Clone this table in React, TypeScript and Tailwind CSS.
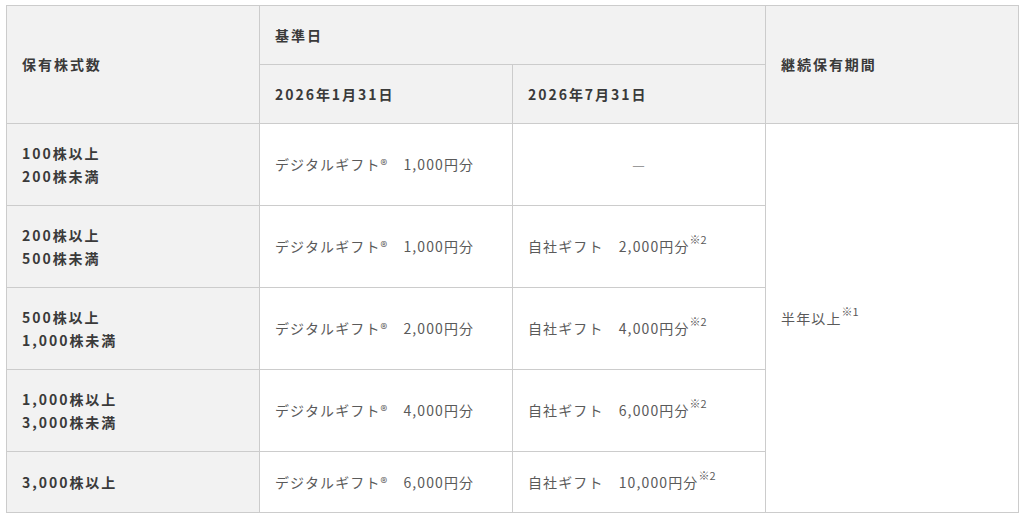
const rows = [
  { shares: ['100株以上', '200株未満'], jan: '1,000', jul: null },
  { shares: ['200株以上', '500株未満'], jan: '1,000', jul: '2,000' },
  { shares: ['500株以上', '1,000株未満'], jan: '2,000', jul: '4,000' },
  { shares: ['1,000株以上', '3,000株未満'], jan: '4,000', jul: '6,000' },
  { shares: ['3,000株以上'], jan: '6,000', jul: '10,000' },
];

const head = 'bg-[#f2f2f2] border border-[#cccccc] px-[15px] py-[17.5px] text-left align-middle font-bold text-[#3a3a3a] tracking-[0.14em]';
const cell = 'border border-[#cccccc] px-[15px] py-[17.5px] align-middle text-[#5a5a5a] tracking-[0.08em]';

function Note({ n }: { n: string }) {
  return <sup className="text-[11px] top-[-8px] tracking-normal">※{n}</sup>;
}

export default function App() {
  return (
    <div className="w-full min-h-[516px] bg-white pt-[5px] px-[6px] font-['Noto_Sans_CJK_JP','Noto_Sans',sans-serif] text-[14px] leading-[23px]">
      <table className="w-[1012px] table-fixed border-collapse">
        <colgroup>
          <col className="w-[253px]" />
          <col className="w-[253px]" />
          <col className="w-[253px]" />
          <col className="w-[253px]" />
        </colgroup>
        <thead>
          <tr>
            <th rowSpan={2} className={head}>保有株式数</th>
            <th colSpan={2} className={head}>基準日</th>
            <th rowSpan={2} className={head}>継続保有期間</th>
          </tr>
          <tr>
            <th className={head}>2026年1月31日</th>
            <th className={head}>2026年7月31日</th>
          </tr>
        </thead>
        <tbody>
          {rows.map((r, i) => (
            <tr key={i} className={i === rows.length - 1 ? 'h-[61px]' : ''}>
              <th className={head}>
                {r.shares.map((s) => (
                  <div key={s}>{s}</div>
                ))}
              </th>
              <td className={cell}>デジタルギフト®　{r.jan}円分</td>
              {r.jul ? (
                <td className={cell}>
                  自社ギフト　{r.jul}円分<Note n="2" />
                </td>
              ) : (
                <td className={cell + ' text-center'}>
                  <span className="text-[#9a9a9a]">—</span>
                </td>
              )}
              {i === 0 && (
                <td rowSpan={5} className={cell}>
                  半年以上<Note n="1" />
                </td>
              )}
            </tr>
          ))}
        </tbody>
      </table>
    </div>
  );
}
